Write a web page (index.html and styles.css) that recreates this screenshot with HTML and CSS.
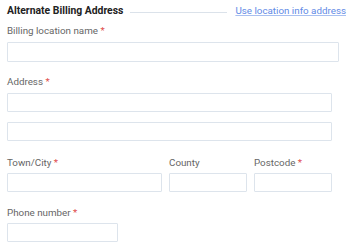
FILE: index.html
```html
<!DOCTYPE html>
<html>
<head>
<meta charset="utf-8">
<link rel="stylesheet" href="styles.css">
</head>
<body>
<div class="header">
  <span class="title">Alternate Billing Address</span>
  <span class="rule"></span>
  <a class="link" href="#">Use location info address</a>
</div>
<div class="form">
  <div class="field f1">
    <label class="label">Billing location name <span class="req">*</span></label>
    <div class="input wide"></div>
  </div>
  <div class="field f2">
    <label class="label">Address <span class="req">*</span></label>
    <div class="input"></div>
    <div class="input second"></div>
  </div>
  <div class="row f3">
    <div class="field">
      <label class="label">Town/City <span class="req">*</span></label>
      <div class="input"></div>
    </div>
    <div class="field">
      <label class="label">County</label>
      <div class="input"></div>
    </div>
    <div class="field">
      <label class="label">Postcode <span class="req">*</span></label>
      <div class="input"></div>
    </div>
  </div>
  <div class="field f4">
    <label class="label">Phone number <span class="req">*</span></label>
    <div class="input phone"></div>
  </div>
</div>
</body>
</html>
```

FILE: styles.css
```css
html, body {
  margin: 0;
  background: #ffffff;
}
body {
  padding: 3px 7px 0 7px;
  font-family: Roboto, "Liberation Sans", Arial, sans-serif;
  width: 353px;
  box-sizing: border-box;
}
.header {
  display: flex;
  align-items: center;
  height: 16px;
}
.title {
  font-size: 10.4px;
  font-weight: 700;
  color: #222;
  line-height: 16px;
  white-space: nowrap;
}
.rule {
  flex: 1;
  height: 1px;
  background: #dbe2ea;
  margin: 0 8px 0 7px;
  position: relative;
  top: 1px;
}
.link {
  font-size: 9.8px;
  color: #5f8ae6;
  text-decoration: underline;
  text-decoration-color: #a9c0f0;
  line-height: 16px;
  white-space: nowrap;
}
.form {
  width: 325px;
}
.field {
  display: flex;
  flex-direction: column;
}
.label {
  display: block;
  font-size: 9.8px;
  line-height: 14px;
  color: #666;
  margin-bottom: 3.5px;
  white-space: nowrap;
}
.req {
  color: #e04b4b;
}
.input {
  height: 19px;
  border: 1px solid #dde4ec;
  border-radius: 1px;
  background: #fff;
  box-sizing: border-box;
}
.input.wide {
  width: 332px;
  height: 20px;
}
.input.second {
  margin-top: 10px;
}
.f1 {
  margin-top: 5px;
}
.f2 {
  margin-top: 13.5px;
}
.row {
  display: grid;
  grid-template-columns: 155px 78px 78px;
  column-gap: 7px;
  margin-top: 15px;
}
.f4 {
  margin-top: 13.5px;
}
.input.phone {
  width: 111px;
}
```
